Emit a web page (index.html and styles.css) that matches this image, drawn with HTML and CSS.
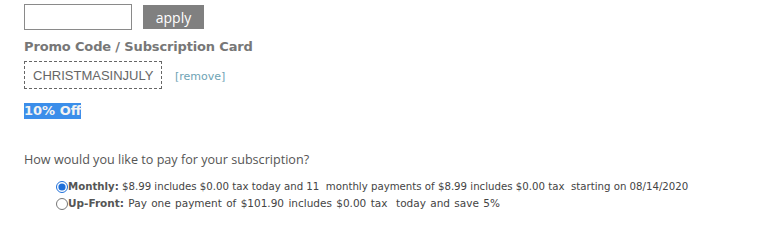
FILE: index.html
```html
<!DOCTYPE html>
<html>
<head>
<meta charset="utf-8">
<link rel="stylesheet" href="styles.css">
</head>
<body>
<div class="page">
  <div class="promo-row">
    <input class="promo-input" type="text">
    <button class="apply-btn">apply</button>
  </div>
  <div class="promo-label">Promo Code / Subscription Card</div>
  <div class="code-row">
    <span class="code-box">CHRISTMASINJULY</span>
    <a class="remove-link" href="#">[remove]</a>
  </div>
  <div class="discount-row"><span class="discount">10% Off</span></div>
  <div class="question">How would you like to pay for your subscription?</div>
  <div class="options">
    <label class="option"><input type="radio" name="pay" checked><span><b>Monthly:</b> $8.99 includes $0.00 tax today and 11  monthly payments of $8.99 includes $0.00 tax  starting on 08/14/2020</span></label>
    <label class="option option-upfront"><input type="radio" name="pay"><span><b>Up-Front:</b> Pay one payment of $101.90 includes $0.00 tax  today and save 5%</span></label>
  </div>
</div>
</body>
</html>
```
FILE: styles.css
```css
html, body {
  margin: 0;
  padding: 0;
  background: #fff;
}
.page {
  padding: 4px 0 0 24px;
  font-family: "DejaVu Sans", Verdana, sans-serif;
}
.promo-row {
  display: flex;
  align-items: center;
  gap: 11px;
  height: 26px;
}
.promo-input {
  box-sizing: border-box;
  width: 108px;
  height: 26px;
  margin: 0;
  border: 1px solid #8a8a8a;
  padding: 0 4px;
}
.apply-btn {
  box-sizing: border-box;
  width: 61px;
  height: 24px;
  margin: 0;
  border: none;
  background: #808080;
  color: #fff;
  font-family: "Open Sans", sans-serif;
  font-size: 14px;
  padding: 0;
}
.promo-label {
  margin-top: 9px;
  font-size: 13px;
  font-weight: bold;
  color: #777;
  line-height: 16px;
  letter-spacing: -0.15px;
}
.code-row {
  margin-top: 6px;
  display: flex;
  align-items: center;
  gap: 13px;
}
.code-box {
  box-sizing: border-box;
  height: 28px;
  width: 138px;
  border: 1px dashed #666;
  display: flex;
  align-items: center;
  padding-left: 8px;
  font-family: "Liberation Sans", Arial, sans-serif;
  font-size: 13px;
  color: #666;
}
.remove-link {
  font-size: 11px;
  color: #6ea3b4;
  text-decoration: none;
  margin-top: 3px;
}
.discount-row {
  margin-top: 11px;
  height: 16px;
}
.discount {
  display: inline-block;
  background: #3b8eea;
  color: #f3f3f3;
  font-size: 13px;
  font-weight: bold;
  line-height: 16px;
  letter-spacing: 0;
}
.question {
  margin-top: 35px;
  font-family: "Open Sans", sans-serif;
  font-size: 12.6px;
  color: #555;
  line-height: 18px;
}
.options {
  margin-top: 9px;
  padding-left: 32px;
  display: flex;
  flex-direction: column;
}
.option {
  display: flex;
  align-items: center;
  font-size: 10.2px;
  color: #444;
  line-height: 17px;
  white-space: pre;
}
.option-upfront {
  font-size: 10.5px;
  word-spacing: 1px;
}
.option input {
  margin: 0;
  width: 12px;
  height: 12px;
  accent-color: #1e6fd9;
}
.option b {
  color: #555;
}
```
